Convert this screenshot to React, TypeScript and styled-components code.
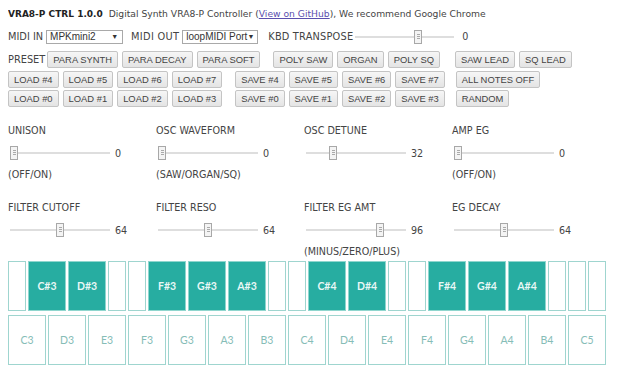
import React from 'react';
import styled, { createGlobalStyle } from 'styled-components';

const GlobalStyle = createGlobalStyle`
  body {
    margin: 8px;
    background: #ffffff;
    font-family: 'DejaVu Sans', Verdana, sans-serif;
    font-size: 9.6px;
    color: #444;
  }
`;

const Title = styled.div`
  height: 14px;
  line-height: 12px;
  margin-bottom: 6px;
  white-space: nowrap;
  font-size: 9.2px;
`;

const Brand = styled.b`
  color: #222;
  font-size: 9px;
  margin-right: 3px;
`;

const Link = styled.a`
  color: #5b4fae;
  text-decoration: underline;
`;

const Row = styled.div<{ $mb?: number }>`
  display: flex;
  align-items: center;
  height: 17px;
  margin-bottom: ${p => p.$mb ?? 2.5}px;
  white-space: nowrap;
`;

const Label = styled.span<{ $ml?: number; $mr?: number; $ls?: number }>`
  font-size: 9.8px;
  letter-spacing: ${p => p.$ls ?? 0}px;
  margin-left: ${p => p.$ml ?? 0}px;
  margin-right: ${p => p.$mr ?? 3}px;
`;

const Select = styled.div<{ $w: number }>`
  width: ${p => p.$w}px;
  height: 14px;
  box-sizing: border-box;
  border: 1px solid #a9a9a9;
  display: flex;
  align-items: center;
  justify-content: space-between;
  padding: 0 4px 0 3px;
  color: #333;
  font-family: 'Liberation Sans', Arial, sans-serif;
  font-size: 10px;
  &::after {
    content: '▼';
    font-size: 7px;
  }
`;

const Button = styled.button<{ $ml?: number }>`
  font-family: 'Liberation Sans', Arial, sans-serif;
  font-size: 9.4px;
  color: #444;
  height: 17px;
  padding: 0 5px;
  margin: 0 4px 0 ${p => p.$ml ?? 0}px;
  border: 1px solid #c4c4c4;
  border-radius: 2px;
  background: linear-gradient(#f6f6f6, #e4e4e4);
  white-space: nowrap;
`;

const SliderBox = styled.div<{ $w: number }>`
  position: relative;
  width: ${p => p.$w}px;
  height: 14px;
  flex: none;
  &::before {
    content: '';
    position: absolute;
    left: 0;
    right: 0;
    top: 6px;
    height: 2px;
    background: #dedede;
  }
`;

const Thumb = styled.div`
  position: absolute;
  top: 0;
  width: 8px;
  height: 14px;
  margin-left: -4px;
  box-sizing: border-box;
  border: 1px solid #a8a8a8;
  background-color: #f4f4f4;
  background-image: linear-gradient(
    #f4f4f4 0 4px, #aaa 4px 5px, #f4f4f4 5px 6px, #aaa 6px 7px, #f4f4f4 7px 8px, #aaa 8px 9px, #f4f4f4 9px
  );
  background-size: 3px 14px;
  background-position: 2px -1px;
  background-repeat: no-repeat;
`;

const Value = styled.span<{ $gap: number }>`
  margin-left: ${p => p.$gap}px;
  color: #444;
`;

const Slider: React.FC<{ width: number; frac: number; value: string; gap?: number }> = ({
  width,
  frac,
  value,
  gap = 5,
}) => (
  <>
    <SliderBox $w={width}>
      <Thumb style={{ left: 4 + frac * (width - 8) }} />
    </SliderBox>
    <Value $gap={gap}>{value}</Value>
  </>
);

const Controls = styled.div`
  display: grid;
  grid-template-columns: repeat(4, 148px);
  row-gap: 19px;
  margin-top: 17px;
`;

const Control = styled.div`
  display: flex;
  flex-direction: column;
`;

const CtrlLabel = styled.div`
  height: 14px;
  line-height: 14px;
  margin-bottom: 7px;
`;

const CtrlRow = styled.div`
  display: flex;
  align-items: center;
  height: 16px;
  padding-left: 2px;
  margin-bottom: 7px;
`;

const Sub = styled.div`
  height: 14px;
  line-height: 14px;
`;

const Keyboard = styled.div`
  margin-top: 2px;
  width: 606px;
`;

const KeyRow = styled.div<{ $mb?: number }>`
  display: flex;
  height: 50px;
  margin-bottom: ${p => p.$mb ?? 0}px;
`;

const Key = styled.div<{ $w: number; $dark?: boolean }>`
  width: ${p => p.$w}px;
  flex: none;
  box-sizing: border-box;
  margin-right: 2px;
  border: 1px solid ${p => (p.$dark ? '#8fd6ce' : '#9fd5cf')};
  background: ${p => (p.$dark ? '#27ada1' : '#ffffff')};
  color: ${p => (p.$dark ? '#e8f7f5' : '#86bdb7')};
  font-family: Lato, 'Open Sans', sans-serif;
  font-size: 10.5px;
  font-weight: ${p => (p.$dark ? 700 : 400)};
  display: flex;
  align-items: center;
  justify-content: center;
`;

const blackRow: (string | null)[] = [
  null, 'C#3', 'D#3', null, null, 'F#3', 'G#3', 'A#3', null,
  null, 'C#4', 'D#4', null, null, 'F#4', 'G#4', 'A#4', null, null, null,
];

const whiteRow = ['C3', 'D3', 'E3', 'F3', 'G3', 'A3', 'B3', 'C4', 'D4', 'E4', 'F4', 'G4', 'A4', 'B4', 'C5'];

const controls = [
  { label: 'UNISON', v: 0, sub: '(OFF/ON)' },
  { label: 'OSC WAVEFORM', v: 0, sub: '(SAW/ORGAN/SQ)' },
  { label: 'OSC DETUNE', v: 32, sub: '' },
  { label: 'AMP EG', v: 0, sub: '(OFF/ON)' },
  { label: 'FILTER CUTOFF', v: 64, sub: '' },
  { label: 'FILTER RESO', v: 64, sub: '' },
  { label: 'FILTER EG AMT', v: 96, sub: '(MINUS/ZERO/PLUS)' },
  { label: 'EG DECAY', v: 64, sub: '' },
];

export default function App() {
  return (
    <>
      <GlobalStyle />
      <Title>
        <Brand>VRA8-P CTRL 1.0.0</Brand> Digital Synth VRA8-P Controller (<Link>View on GitHub</Link>), We recommend Google Chrome
      </Title>
      <Row $mb={6}>
        <Label>MIDI IN</Label>
        <Select $w={77}>MPKmini2</Select>
        <Label $ml={8} $ls={0.3}>MIDI OUT</Label>
        <Select $w={76}>loopMIDI Port</Select>
        <Label $ml={10} $mr={2} $ls={0.2}>KBD TRANSPOSE</Label>
        <Slider width={99} frac={0.64} value="0" gap={8} />
      </Row>
      <Row>
        <Label $mr={2}>PRESET</Label>
        <Button>PARA SYNTH</Button>
        <Button>PARA DECAY</Button>
        <Button>PARA SOFT</Button>
        <Button $ml={9}>POLY SAW</Button>
        <Button>ORGAN</Button>
        <Button>POLY SQ</Button>
        <Button $ml={11}>SAW LEAD</Button>
        <Button>SQ LEAD</Button>
      </Row>
      <Row>
        <Button>LOAD #4</Button>
        <Button>LOAD #5</Button>
        <Button>LOAD #6</Button>
        <Button>LOAD #7</Button>
        <Button $ml={9}>SAVE #4</Button>
        <Button>SAVE #5</Button>
        <Button>SAVE #6</Button>
        <Button>SAVE #7</Button>
        <Button $ml={7}>ALL NOTES OFF</Button>
      </Row>
      <Row>
        <Button>LOAD #0</Button>
        <Button>LOAD #1</Button>
        <Button>LOAD #2</Button>
        <Button>LOAD #3</Button>
        <Button $ml={9}>SAVE #0</Button>
        <Button>SAVE #1</Button>
        <Button>SAVE #2</Button>
        <Button>SAVE #3</Button>
        <Button $ml={7}>RANDOM</Button>
      </Row>
      <Controls>
        {controls.map(c => (
          <Control key={c.label}>
            <CtrlLabel>{c.label}</CtrlLabel>
            <CtrlRow>
              <Slider width={100} frac={c.v / 127} value={String(c.v)} />
            </CtrlRow>
            <Sub>{c.sub}</Sub>
          </Control>
        ))}
      </Controls>
      <Keyboard>
        <KeyRow $mb={4}>
          {blackRow.map((k, i) => (
            <Key key={i} $w={k ? 38 : 18} $dark={!!k}>{k}</Key>
          ))}
        </KeyRow>
        <KeyRow>
          {whiteRow.map(k => (
            <Key key={k} $w={38}>{k}</Key>
          ))}
        </KeyRow>
      </Keyboard>
    </>
  );
}
